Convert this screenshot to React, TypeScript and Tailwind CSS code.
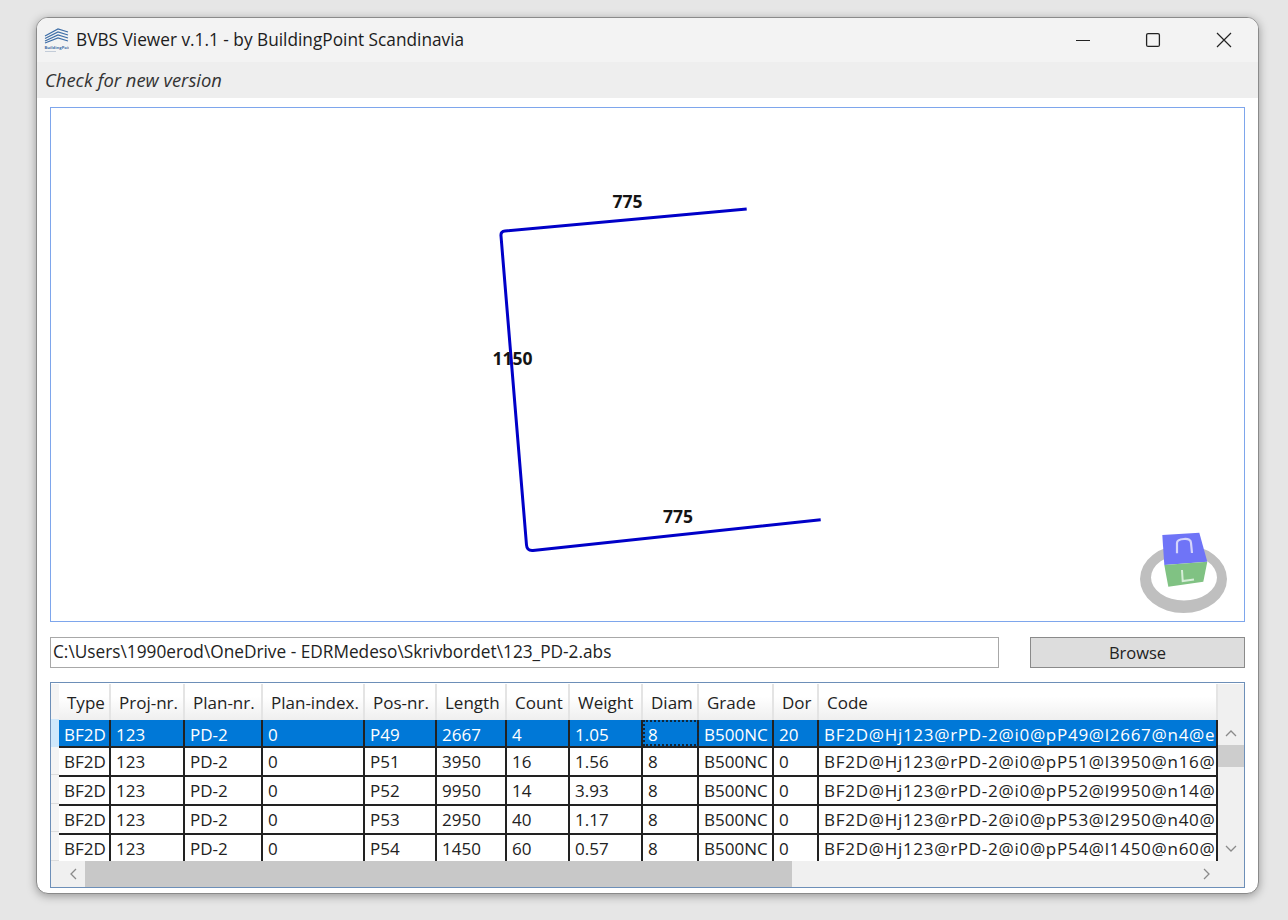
const font = "[font-family:'Open_Sans','Noto_Sans',sans-serif]";

const cols = [
  { name: "Type", key: "type" },
  { name: "Proj-nr.", key: "proj" },
  { name: "Plan-nr.", key: "plan" },
  { name: "Plan-index.", key: "index" },
  { name: "Pos-nr.", key: "pos" },
  { name: "Length", key: "length" },
  { name: "Count", key: "count" },
  { name: "Weight", key: "weight" },
  { name: "Diam", key: "diam" },
  { name: "Grade", key: "grade" },
  { name: "Dor", key: "dor" },
  { name: "Code", key: "code" },
] as const;

const gridCols = "grid grid-cols-[52px_74px_78px_102px_72px_70px_63px_73px_56px_75px_45px_399px]";

const rows = [
  { pos: "P49", length: "2667", count: "4", weight: "1.05", dor: "20", code: "BF2D@Hj123@rPD-2@i0@pP49@l2667@n4@e1" },
  { pos: "P51", length: "3950", count: "16", weight: "1.56", dor: "0", code: "BF2D@Hj123@rPD-2@i0@pP51@l3950@n16@e" },
  { pos: "P52", length: "9950", count: "14", weight: "3.93", dor: "0", code: "BF2D@Hj123@rPD-2@i0@pP52@l9950@n14@e" },
  { pos: "P53", length: "2950", count: "40", weight: "1.17", dor: "0", code: "BF2D@Hj123@rPD-2@i0@pP53@l2950@n40@e" },
  { pos: "P54", length: "1450", count: "60", weight: "0.57", dor: "0", code: "BF2D@Hj123@rPD-2@i0@pP54@l1450@n60@e" },
].map((r) => ({ ...r, type: "BF2D", proj: "123", plan: "PD-2", index: "0", diam: "8", grade: "B500NC" }));

function Logo() {
  return (
    <svg width="26" height="26" viewBox="0 0 26 26" className="shrink-0">
      <g fill="none" stroke="#3f6fa8" strokeWidth="1.2">
        <path d="M2 9 L15 2 L25 5" />
        <path d="M2 11.5 L15 5 L25 8" />
        <path d="M2 14 L15 8 L25 11" />
        <path d="M2 16 L15 11 L25 14" />
      </g>
      <text x="1.5" y="21.5" fontSize="4.2" fontWeight="700" fill="#3f6fa8">BuildingPoint</text>
      <rect x="2" y="24" width="11" height="1" fill="#c3ccd8" />
    </svg>
  );
}

function WindowButtons() {
  return (
    <div className="flex h-full">
      <div className="w-[70px] flex items-center justify-center">
        <svg width="16" height="16" viewBox="0 0 16 16">
          <path d="M1 8.5 H15" stroke="#222" strokeWidth="1.2" />
        </svg>
      </div>
      <div className="w-[70px] flex items-center justify-center">
        <svg width="16" height="16" viewBox="0 0 16 16">
          <rect x="1.6" y="1.6" width="12.8" height="12.8" rx="1.5" fill="none" stroke="#222" strokeWidth="1.3" />
        </svg>
      </div>
      <div className="w-[68px] ml-[2px] flex items-center justify-center">
        <svg width="16" height="16" viewBox="0 0 16 16">
          <path d="M1 1 L15 15 M15 1 L1 15" stroke="#222" strokeWidth="1.2" />
        </svg>
      </div>
    </div>
  );
}

function Viewer() {
  return (
    <div className="relative h-[515px] bg-white border border-[#7ea6ec]">
      <svg className="absolute inset-0 w-full h-full" viewBox="51 108 1193 513">
        <path
          d="M746.7 209 L505 231 Q500.5 231.5 501 236 L526.5 545 Q527 551 533 550.5 L820.7 519.7"
          fill="none"
          stroke="#0000c8"
          strokeWidth="3"
        />
        <g fontFamily="'Open Sans', sans-serif" fontWeight="700" fontSize="17.5" fill="#141414">
          <text x="612.5" y="208">775</text>
          <text x="492.5" y="365">1150</text>
          <text x="663" y="523">775</text>
        </g>
        {/* orientation cube */}
        <path
          fillRule="evenodd"
          fill="#bfbfbf"
          d="M1140 579 a43.5 34 0 1 0 87 0 a43.5 34 0 1 0 -87 0 Z M1151 577.5 a33 23 0 1 0 66 0 a33 23 0 1 0 -66 0 Z"
        />
        <polygon points="1162.3,535 1199.3,532.7 1207.3,561.7 1164.3,565" fill="#6f74f7" />
        <polygon points="1164.3,565 1207.3,561.7 1203.3,581.7 1168.3,586.7" fill="#80c283" />
        <path d="M1177 553.3 L1177 543 Q1177 539.5 1184 539 Q1191 538.5 1191 543 L1192 553" fill="none" stroke="#d5d5fb" strokeWidth="2.2" />
        <path d="M1182 570 L1182.7 581 L1194 579.5" fill="none" stroke="#d6eed8" strokeWidth="2" />
      </svg>
    </div>
  );
}

function Grid() {
  return (
    <div className="relative mt-[14px] h-[206px] border border-[#6d8fb8] bg-white overflow-hidden pt-px">
      <div className="flex h-[177px]">
        {/* row headers */}
        <div className="w-[8px] shrink-0 flex flex-col bg-[#f4f4f4]">
          <div className="h-[36px]" />
          <div className="h-[28px] bg-[#cfe8fb]" />
          {rows.slice(1).map((r) => (
            <div key={r.pos} className="h-[29px] border-b border-[#dcdcdc]" />
          ))}
        </div>
        {/* table */}
        <div className="w-[1159px] shrink-0 overflow-hidden">
          <div className={`${gridCols} h-[36px] bg-gradient-to-b from-white from-[35%] to-[#efefef] text-[#222]`}>
            {cols.map((c) => (
              <div key={c.key} className="pl-[8px] pt-[4px] border-r-2 border-[#e4e4e4] whitespace-nowrap leading-[29px]">
                {c.name}
              </div>
            ))}
          </div>
          {rows.map((r, i) => (
            <div key={r.pos} className={`${gridCols} ${i === 0 ? "h-[28px]" : "h-[29px]"} ${i === rows.length - 1 ? "" : "border-b-2 border-[#222]"}`}>
              {cols.map((c) => (
                <div
                  key={c.key}
                  className={`pl-[5px] overflow-hidden whitespace-nowrap ${i === 0 ? "leading-[29px]" : "leading-[28px]"} border-r-2 border-[#222] ${
                    c.key === "code" ? "tracking-[0.72px]" : ""
                  } ${i === 0 ? "bg-[#0078d7] text-white" : "bg-white text-[#222]"} ${
                    i === 0 && c.key === "diam" ? "outline-2 -outline-offset-2 outline-dotted outline-[#10263a]" : ""
                  }`}
                >
                  {r[c.key]}
                </div>
              ))}
            </div>
          ))}
        </div>
        {/* vertical scrollbar */}
        <div className="w-[26px] shrink-0 bg-[#f0f0f0] flex flex-col items-center pt-[44px]">
          <svg width="14" height="10" viewBox="0 0 14 10">
            <path d="M2 8 L7 3 L12 8" fill="none" stroke="#8a8a8a" strokeWidth="1.3" />
          </svg>
          <div className="w-full h-[22px] bg-[#cdcdcd] mt-[7px]" />
          <svg width="14" height="10" viewBox="0 0 14 10" className="mt-[77px]">
            <path d="M2 2 L7 7 L12 2" fill="none" stroke="#8a8a8a" strokeWidth="1.3" />
          </svg>
        </div>
      </div>
      {/* horizontal scrollbar */}
      <div className="flex h-[26px] bg-[#f0f0f0]">
        <div className="w-[34px] flex items-center justify-end pr-[7px]">
          <svg width="10" height="14" viewBox="0 0 10 14">
            <path d="M8 2 L3 7 L8 12" fill="none" stroke="#8a8a8a" strokeWidth="1.3" />
          </svg>
        </div>
        <div className="w-[707px] bg-[#c8c8c8]" />
        <div className="flex-1 flex items-center justify-end pr-[32px]">
          <svg width="10" height="14" viewBox="0 0 10 14">
            <path d="M2 2 L7 7 L2 12" fill="none" stroke="#8a8a8a" strokeWidth="1.3" />
          </svg>
        </div>
      </div>
    </div>
  );
}

export default function App() {
  return (
    <div className={`${font} w-[1288px] h-[920px] bg-[#e6e6e6] pl-[36px] pt-[17px] text-[17px]`}>
      <div className="w-[1223px] h-[877px] bg-white border border-[#8a8a8a] rounded-[12px] overflow-hidden shadow-[0_2px_10px_rgba(0,0,0,0.35)] flex flex-col">
        <div className="h-[44px] shrink-0 bg-[#f3f3f3] flex items-center justify-between">
          <div className="flex items-center pl-[6px] gap-[7px] text-[#1c1c1c] text-[17.25px]">
            <Logo />
            <span className="whitespace-nowrap">BVBS Viewer v.1.1 - by BuildingPoint Scandinavia</span>
          </div>
          <WindowButtons />
        </div>
        <div className="h-[36px] shrink-0 bg-[#eeeeee] flex items-center pl-[8px] italic text-[#333] text-[18.4px]">
          Check for new version
        </div>
        <div className="flex-1 px-[13px] pt-[9px]">
          <Viewer />
          <div className="flex justify-between mt-[15px] h-[31px]">
            <div className="w-[949px] border border-[#a8a8a8] bg-white pl-[2px] leading-[28px] text-[#222] whitespace-nowrap text-[17.25px]">
              C:\Users\1990erod\OneDrive - EDRMedeso\Skrivbordet\123_PD-2.abs
            </div>
            <div className="w-[215px] border border-[#8a8a8a] bg-[#dddddd] text-center leading-[29px] text-[#222] text-[16.5px]">
              Browse
            </div>
          </div>
          <Grid />
        </div>
      </div>
    </div>
  );
}
